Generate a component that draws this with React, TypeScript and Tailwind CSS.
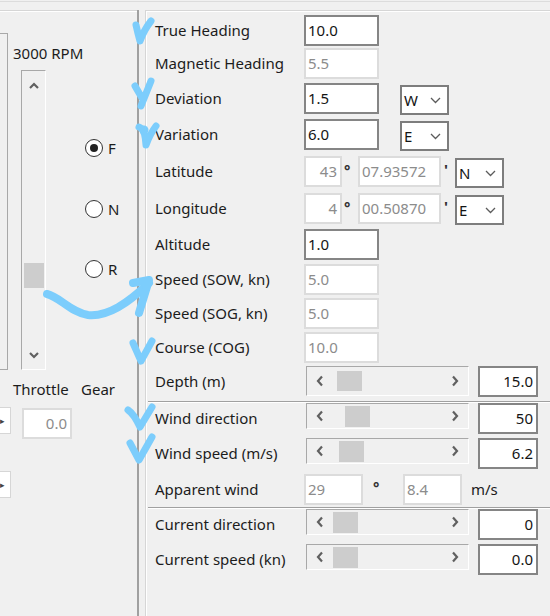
import type { ReactNode } from "react";
import clsx from "clsx";

// WinForms-like "boat simulator" settings panel with hand-drawn blue marks on top

function Field({ value, on, right, className }: { value: string; on?: boolean; right?: boolean; className: string }) {
  return (
    <div
      className={clsx(
        "h-[31px] flex items-center bg-white border-2 text-[15px] leading-none",
        on ? "border-[#858585] text-[#141414]" : "border-[#dcdcdc] text-[#8c8c8c]",
        right ? "justify-end pr-[3px]" : "pl-[2px]",
        className
      )}
    >
      {value}
    </div>
  );
}

function Combo({ value, className = "" }: { value: string; className?: string }) {
  return (
    <div className={clsx("mt-[2px] h-[30px] w-[49px] bg-white border-2 border-[#7d7d7d] flex items-center justify-between pl-[2px] pr-[6px] text-[15px] text-[#141414]", className)}>
      <span>{value}</span>
      <svg width="11" height="7" viewBox="0 0 11 7">
        <path d="M1 1l4.5 4.5L10 1" fill="none" stroke="#5c5c5c" strokeWidth="1.3" />
      </svg>
    </div>
  );
}

function HScroll({ pad, tall }: { pad: string; tall?: boolean }) {
  return (
    <div
      className={clsx(
        "ml-[2px] w-[163px] flex items-center border border-[#a8a8a8] border-r-white border-b-white",
        tall ? "h-[30px]" : "h-[26px]"
      )}
    >
      <div className="w-[26px] flex justify-center">
        <svg width="8" height="12" viewBox="0 0 8 12">
          <path d="M6 1.5L2 6l4 4.5" fill="none" stroke="#606060" strokeWidth="2.2" />
        </svg>
      </div>
      <div className={pad} />
      <div className={clsx("w-[25px] bg-[#cdcdcd]", tall ? "h-[20px]" : "h-[21px]")} />
      <div className="flex-1" />
      <div className="w-[26px] flex justify-center">
        <svg width="8" height="12" viewBox="0 0 8 12">
          <path d="M2 1.5L6 6l-4 4.5" fill="none" stroke="#606060" strokeWidth="2.2" />
        </svg>
      </div>
    </div>
  );
}

function Row({ label, mt, children }: { label: string; mt: string; children?: ReactNode }) {
  return (
    <div className={clsx("flex items-start h-[31px]", mt)}>
      <div className="w-[149px] h-[31px] flex items-center text-[15px] text-[#1c1c1c] whitespace-nowrap">{label}</div>
      {children}
    </div>
  );
}

function Radio({ label, checked, mt }: { label: string; checked?: boolean; mt: string }) {
  return (
    <div className={clsx("flex items-center h-[20px]", mt)}>
      <div className="w-[18px] h-[18px] rounded-full border-[1.5px] border-[#333] bg-white flex items-center justify-center">
        {checked && <div className="w-[8px] h-[8px] rounded-full bg-[#222]" />}
      </div>
      <span className="ml-[5px] text-[15px] text-[#1c1c1c]">{label}</span>
    </div>
  );
}

export default function App() {
  return (
    <div className="relative w-[550px] h-[616px] overflow-hidden bg-[#f0f0f0] font-['Noto_Sans',sans-serif]">
      <div className="mt-[1px] h-[9px] border-t border-[#dcdcdc]" />

      <div className="flex h-[606px]">
        {/* left: throttle + gear */}
        <div className="w-[137px] flex border-t border-[#d6d6d6] shadow-[inset_0_1px_0_#ffffff]">
          <div className="w-[12px] flex flex-col">
            <div className="mt-[22px] h-[337px] w-[8px] border border-l-0 border-[#a8a8a8]" />
            <div className="mt-[37px] h-[27px] w-[11px] bg-white border border-l-0 border-[#d6d6d6] flex items-center text-[9px] text-[#444]">▸</div>
            <div className="mt-[37px] h-[27px] w-[11px] bg-white border border-l-0 border-[#d6d6d6] flex items-center text-[9px] text-[#444]">▸</div>
          </div>

          <div className="flex-1 flex flex-col">
            <div className="mt-[32px] ml-[1px] h-[20px] leading-[20px] text-[15px] text-[#1c1c1c]">3000 RPM</div>
            <div className="mt-[7px] flex">
              <div className="ml-[9px] w-[25px] h-[300px] flex flex-col items-center border border-[#a8a8a8] border-r-white border-b-white">
                <div className="h-[28px] flex items-center">
                  <svg width="10" height="7" viewBox="0 0 10 7">
                    <path d="M1 6l4-4 4 4" fill="none" stroke="#606060" strokeWidth="2.2" />
                  </svg>
                </div>
                <div className="h-[164px]" />
                <div className="w-[20px] h-[25px] bg-[#cdcdcd]" />
                <div className="flex-1" />
                <div className="h-[28px] flex items-center">
                  <svg width="10" height="7" viewBox="0 0 10 7">
                    <path d="M1 1l4 4 4-4" fill="none" stroke="#606060" strokeWidth="2.2" />
                  </svg>
                </div>
              </div>
              <div className="ml-[39px] flex flex-col">
                <Radio label="F" checked mt="mt-[68px]" />
                <Radio label="N" mt="mt-[41px]" />
                <Radio label="R" mt="mt-[40px]" />
              </div>
            </div>
            <div className="mt-[9px] ml-[1px] h-[20px] flex items-center text-[15px] text-[#1c1c1c]">
              <span className="w-[68px]">Throttle</span>
              <span>Gear</span>
            </div>
            <Field value="0.0" right className="mt-[9px] ml-[10px] w-[50px] h-[30px]" />
          </div>
        </div>

        <div className="w-[2px] bg-[#a0a0a0]" />
        <div className="w-[6px]" />

        {/* right: navigation data */}
        <div className="flex-1 flex flex-col border-t border-l border-[#d6d6d6] shadow-[inset_1px_1px_0_#ffffff] pl-[9px]">
          <Row label="True Heading" mt="mt-[4px]">
            <Field value="10.0" on className="w-[75px]" />
          </Row>
          <Row label="Magnetic Heading" mt="mt-[2px]">
            <Field value="5.5" className="w-[75px]" />
          </Row>
          <Row label="Deviation" mt="mt-[4px]">
            <Field value="1.5" on className="w-[75px]" />
            <Combo value="W" className="ml-[21px]" />
          </Row>
          <Row label="Variation" mt="mt-[5px]">
            <Field value="6.0" on className="w-[75px]" />
            <Combo value="E" className="ml-[21px]" />
          </Row>
          <Row label="Latitude" mt="mt-[6px]">
            <Field value="43" right className="w-[38px]" />
            <div className="w-[16px] h-[31px] pl-[2px] pt-[3px] text-[15px] font-bold text-[#333]">°</div>
            <Field value="07.93572" className="w-[83px]" />
            <div className="w-[14px] h-[31px] pl-[3px] pt-[2px] text-[15px] font-bold text-[#333]">'</div>
            <Combo value="N" />
          </Row>
          <Row label="Longitude" mt="mt-[6px]">
            <Field value="4" right className="w-[38px]" />
            <div className="w-[16px] h-[31px] pl-[2px] pt-[3px] text-[15px] font-bold text-[#333]">°</div>
            <Field value="00.50870" className="w-[83px]" />
            <div className="w-[14px] h-[31px] pl-[3px] pt-[2px] text-[15px] font-bold text-[#333]">'</div>
            <Combo value="E" />
          </Row>
          <Row label="Altitude" mt="mt-[5px]">
            <Field value="1.0" on className="w-[75px]" />
          </Row>
          <Row label="Speed (SOW, kn)" mt="mt-[4px]">
            <Field value="5.0" className="w-[75px]" />
          </Row>
          <Row label="Speed (SOG, kn)" mt="mt-[3px]">
            <Field value="5.0" className="w-[75px]" />
          </Row>
          <Row label="Course (COG)" mt="mt-[3px]">
            <Field value="10.0" className="w-[75px]" />
          </Row>
          <Row label="Depth (m)" mt="mt-[3px]">
            <HScroll pad="w-[4px]" tall />
            <Field value="15.0" on right className="ml-[9px] w-[60px]" />
          </Row>

          <div className="mt-[4px] -ml-[7px] h-[2px] border-t border-[#a0a0a0] border-b border-b-white" />

          <Row label="Wind direction" mt="mt-[0px]">
            <HScroll pad="w-[12px]" />
            <Field value="50" on right className="ml-[9px] w-[60px]" />
          </Row>
          <Row label="Wind speed (m/s)" mt="mt-[4px]">
            <HScroll pad="w-[6px]" />
            <Field value="6.2" on right className="ml-[9px] w-[60px]" />
          </Row>
          <Row label="Apparent wind" mt="mt-[5px]">
            <Field value="29" className="w-[59px]" />
            <div className="w-[40px] h-[31px] pl-[10px] pt-[2px] text-[15px] font-bold text-[#333]">°</div>
            <Field value="8.4" className="w-[59px]" />
            <div className="ml-[9px] h-[31px] flex items-center text-[15px] text-[#1c1c1c]">m/s</div>
          </Row>

          <div className="mt-[2px] -ml-[7px] h-[2px] border-t border-[#a0a0a0] border-b border-b-white" />

          <Row label="Current direction" mt="mt-[0px]">
            <HScroll pad="w-[0px]" />
            <Field value="0" on right className="ml-[9px] w-[60px]" />
          </Row>
          <Row label="Current speed (kn)" mt="mt-[4px]">
            <HScroll pad="w-[0px]" />
            <Field value="0.0" on right className="ml-[9px] w-[60px]" />
          </Row>
        </div>
      </div>

      {/* hand-drawn annotation marks */}
      <svg
        className="absolute inset-0 pointer-events-none"
        width="550"
        height="616"
        viewBox="0 0 550 616"
        fill="none"
        stroke="#7ccdfc"
        strokeWidth="7"
        strokeLinecap="round"
        strokeLinejoin="round"
      >
        <path d="M136 25 Q138 34 140 41 Q144 30 151 21" />
        <path d="M135 86 L142 98 M151 81 L141 106" />
        <path d="M139 127 Q145 129 146 145 Q150 134 156 126" />
        <circle cx="144" cy="130" r="4.5" fill="#7ccdfc" stroke="none" />
        <path d="M47 294 C60 297 70 312 88 315 C108 317 128 303 149 283" strokeWidth="8" />
        <path d="M133 283 L149 280 L139 313" strokeWidth="8" />
        <path d="M133 343 L141 361 L152 341" />
        <path d="M128 410 Q134 414 140 427 L152 407" />
        <path d="M130 443 L139 460 L152 437" />
      </svg>
    </div>
  );
}
